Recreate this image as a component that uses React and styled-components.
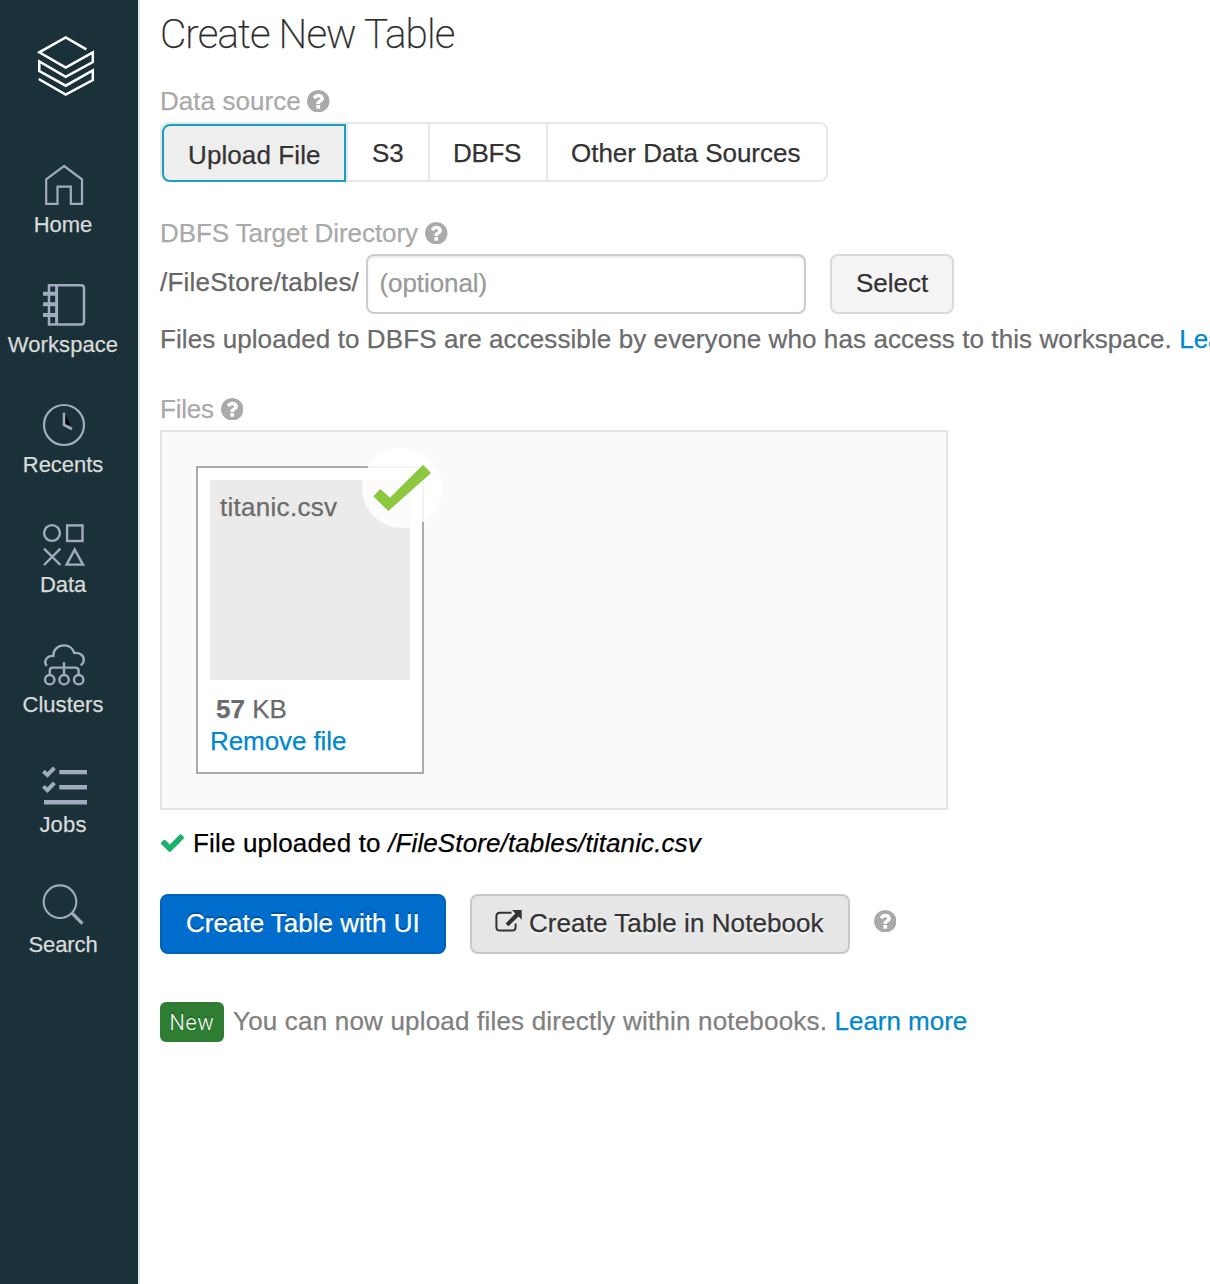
import React from "react";
import styled, { createGlobalStyle, css } from "styled-components";

const GlobalStyle = createGlobalStyle`
  *, *::before, *::after { box-sizing: border-box; }
  body {
    margin: 0;
    background: #fff;
    overflow: hidden;
    font-family: "Liberation Sans", Arial, sans-serif;
    font-size: 26px;
    line-height: 40px;
    color: #6b6b6b;
    -webkit-text-stroke: 0.25px currentColor;
  }
  button, input { font: inherit; margin: 0; }
`;

const Page = styled.div`
  display: flex;
  height: 1284px;
  overflow: hidden;
`;

/* ---------- sidebar ---------- */

const Sidebar = styled.nav`
  flex: none;
  width: 140px;
  padding: 35px 12px 0 0;
  display: flex;
  flex-direction: column;
  align-items: stretch;
  background: #1b3139;
  border-right: 2px solid #e4e8e8;
`;

const Logo = styled.svg`
  display: block;
  flex: none;
  width: 60px;
  height: 62px;
  margin: 0 0 67px 36px;
  fill: none;
  stroke: #fff;
  stroke-width: 2.5;
`;

const NavItem = styled.a`
  flex: none;
  display: flex;
  flex-direction: column;
  align-items: center;
  height: 120px;
  color: #d8dbda;
  text-decoration: none;
`;

const NavIcon = styled.svg`
  display: block;
  width: 50px;
  height: 42px;
  fill: none;
  stroke: #a0abbf;
  stroke-width: 2.4;
  overflow: visible;
`;

const NavLabel = styled.span`
  margin-top: 6px;
  font-size: 22px;
  line-height: 26px;
  letter-spacing: ${(p) => p.$track || 0}px;
  white-space: nowrap;
`;

const HomeIcon = () => (
  <path d="M64 2 L82 15.3 V39.8 H70.8 V22.7 H57.5 V39.8 H46.2 V15.3 Z" strokeWidth="2.2" />
);

const WorkspaceIcon = () => (
  <>
    <path d="M49 1.2 H81 Q84 1.2 84 4.2 V37.6 Q84 40.6 81 40.6 H49 Z" strokeWidth="2.5" />
    <path d="M56.6 1 V41" strokeWidth="3" />
    <path d="M43 9.7 H57 M43 20.3 H57 M43 31 H57" strokeWidth="4" />
  </>
);

const RecentsIcon = () => (
  <>
    <circle cx="64" cy="21" r="20" strokeWidth="2.2" />
    <path d="M65 9.5 L70.5 21.5 L65 20 Z" fill="#000" stroke="none" />
    <path d="M64 8.8 V21 L72 25" strokeWidth="2.6" />
  </>
);

const DataIcon = () => (
  <>
    <circle cx="52" cy="9" r="7.9" />
    <rect x="67.1" y="1.4" width="15.4" height="15.6" />
    <path d="M44 24.6 L60.4 41 M60.4 24.6 L44 41" />
    <path d="M74.7 25.6 L83 40.6 H66.6 Z" />
  </>
);

const ClustersIcon = () => (
  <>
    <path d="M46.8 22 C43.4 17.5 46.3 11.6 53.3 11.9 C53 5.8 58 1.4 64 1.4 C69 1.4 73 4.6 74.2 9 C79.5 8.2 84 11.5 83.8 16 C83.6 18.6 82.4 20.2 80.6 21.3" />
    <path d="M64 18.2 V31 M49.8 31 V26.5 Q49.8 23.6 52.8 23.6 H75.6 Q78.6 23.6 78.6 26.5 V31" />
    <circle cx="49.7" cy="35.7" r="4.7" />
    <circle cx="64.1" cy="35.7" r="4.7" />
    <circle cx="78.7" cy="35.7" r="4.7" />
  </>
);

const JobsIcon = () => (
  <>
    <path d="M43.4 7.3 L47.4 11 L54.4 3.8 M43.4 22.4 L47.4 26.1 L54.4 18.9" strokeWidth="4" />
    <path d="M59.3 8.1 H87 M59.3 23.2 H87 M44 38.3 H87" strokeWidth="4.4" />
  </>
);

const SearchIcon = () => (
  <>
    <circle cx="60" cy="17.7" r="16.3" strokeWidth="2.1" />
    <path d="M71.8 28.9 L82.4 39.6" strokeWidth="3.4" />
  </>
);

const NAV = [
  { label: "Home", Icon: HomeIcon, track: -0.05 },
  { label: "Workspace", Icon: WorkspaceIcon, track: 0.07 },
  { label: "Recents", Icon: RecentsIcon, track: -0.05 },
  { label: "Data", Icon: DataIcon, track: -0.1 },
  { label: "Clusters", Icon: ClustersIcon, track: 0.04 },
  { label: "Jobs", Icon: JobsIcon, track: 0.17 },
  { label: "Search", Icon: SearchIcon, track: -0.09 },
];

/* ---------- main column ---------- */

const Main = styled.main`
  flex: none;
  width: 1070px;
  padding: 4px 0 0 20px;
  overflow: hidden;
`;

const Title = styled.h1`
  margin: 0 0 17px;
  font-family: Roboto, "Liberation Sans", sans-serif;
  font-weight: 200;
  font-size: 40.5px;
  line-height: 60px;
  letter-spacing: -0.9px;
  color: #2b2b2b;
`;

const FieldLabel = styled.div`
  display: flex;
  align-items: flex-start;
  gap: ${(p) => p.$gap}px;
  height: 40px;
  color: #aaa;
  letter-spacing: ${(p) => p.$track || 0}px;
`;

const HelpSvg = styled.svg`
  flex: none;
  width: 22.5px;
  height: 22.5px;
  margin-top: 8.5px;
  fill: #aaa;
`;

const Help = () => (
  <HelpSvg viewBox="128 128 1536 1536">
    <path d="M1024 1376v-192q0-14-9-23t-23-9h-192q-14 0-23 9t-9 23v192q0 14 9 23t23 9h192q14 0 23-9t9-23zM1280 704q0-88-55.5-163t-138.5-116-170-41q-243 0-371 213-15 24 8 42l132 100q7 6 19 6 16 0 25-12 53-68 86-92 34-24 86-24 48 0 85.500 26t37.500 59q0 38-20 61t-68 45q-63 28-115.500 86.500t-52.500 125.500v36q0 14 9 23t23 9h192q14 0 23-9t9-23q0-19 21.500-49.500t54.500-49.500q32-18 49-28.500t46-35 44.500-48 28-60.500 12.500-81zM1664 896q0 209-103 385.500t-279.500 279.500-385.500 103-385.500-103-279.500-279.500-103-385.500 103-385.500 279.500-279.500 385.500-103 385.500 103 279.500 279.500 103 385.500z" />
  </HelpSvg>
);

const Tabs = styled.div`
  display: flex;
  width: 668px;
  height: 60px;
  margin: 1px 0 31px;
  border: 2px solid #e8e8e8;
  border-radius: 8px;
`;

const Tab = styled.button`
  flex: none;
  width: ${(p) => p.$width}px;
  height: 56px;
  padding: 0 0 0 ${(p) => p.$inset}px;
  border: 0;
  border-right: ${(p) => (p.$last ? 0 : "2px solid #e8e8e8")};
  background: none;
  text-align: left;
  line-height: 58px;
  letter-spacing: ${(p) => p.$track || 0}px;
  white-space: nowrap;
  color: #333;
  ${(p) =>
    p.$active &&
    css`
      height: 58px;
      border: 2px solid #1b9fc0;
      border-radius: 8px 0 0 8px;
      background: #eee;
      box-shadow: 2px 0 0 #e8e8e8;
      margin-right: 2px;
    `}
`;

const DirectoryRow = styled.div`
  display: flex;
  align-items: flex-start;
  height: 60px;
  margin: 1px 0 5px;
`;

const Prefix = styled.span`
  width: 206px;
  line-height: 56px;
  letter-spacing: 0.22px;
  white-space: nowrap;
  color: #666;
`;

const PathInput = styled.input`
  width: 440px;
  height: 60px;
  margin-right: 24px;
  padding: 0 12px 2px 11.5px;
  border: 2px solid #ccc;
  border-radius: 8px;
  background: #fff;
  box-shadow: inset 0 2px 2px rgba(0, 0, 0, 0.075);
  outline: none;
  &::placeholder {
    color: #999;
    opacity: 1;
    letter-spacing: -0.08px;
  }
`;

const Button = styled.button`
  display: flex;
  align-items: flex-start;
  width: ${(p) => p.$width}px;
  height: 60px;
  padding: 0 0 0 ${(p) => p.$inset}px;
  border: 2px solid ${(p) => (p.$primary ? "#0062b8" : p.$raised ? "#c8c8c8" : "#d9d9d9")};
  border-radius: 8px;
  background: ${(p) => (p.$primary ? "#006dcc" : p.$raised ? "#e6e6e6" : "#f4f4f4")};
  color: ${(p) => (p.$primary ? "#fff" : "#333")};
  text-shadow: ${(p) =>
    p.$primary ? "0 -2px 0 rgba(0, 0, 0, 0.25)" : "0 2px 2px rgba(255, 255, 255, 0.75)"};
  line-height: 54px;
  letter-spacing: ${(p) => p.$track || 0}px;
  white-space: nowrap;
`;

const Note = styled.p`
  margin: 0 0 30px;
  letter-spacing: 0.09px;
  white-space: nowrap;
`;

const Link = styled.a`
  color: #08c;
  letter-spacing: ${(p) => p.$track || 0}px;
  text-decoration: none;
`;

const DropZone = styled.div`
  width: 788px;
  height: 380px;
  margin-top: 1px;
  padding: 34px;
  border: 2px solid #e5e5e5;
  background: #fafafa;
`;

const FileCard = styled.div`
  position: relative;
  width: 228px;
  height: 308px;
  padding: 12px;
  border: 2px solid #acacac;
  background: #fff;
`;

const Preview = styled.div`
  height: 200px;
  padding: 7px 10px;
  background: #ebebeb;
  letter-spacing: 0.28px;
`;

const FileSize = styled.div`
  margin-top: 13px;
  padding: 0 6px;
  line-height: 32px;
`;

const RemoveLink = styled(Link)`
  display: block;
  line-height: 32px;
`;

const DoneBadge = styled.svg`
  position: absolute;
  top: -20px;
  left: 164px;
  width: 80px;
  height: 80px;
`;

const Status = styled.div`
  display: flex;
  height: 40px;
  margin: 13px 0 31px;
  color: #000;
  letter-spacing: 0.17px;
  white-space: pre;
`;

const StatusCheck = styled.svg`
  width: 23px;
  height: 18px;
  margin: 11px 9px 0 1px;
  fill: #1cb16a;
`;

const Path = styled.em`
  letter-spacing: 0.12px;
`;

const Actions = styled.div`
  display: flex;
  gap: 24px;
  margin-bottom: 48px;
  ${HelpSvg} { margin: 15.5px 0 0 -0.5px; }
`;

const OpenIcon = styled.svg`
  flex: none;
  width: 27px;
  height: 24px;
  margin: 13px 7px 0 0;
  overflow: visible;
`;

const News = styled.div`
  display: flex;
  height: 40px;
  line-height: 38px;
  color: #808080;
  letter-spacing: 0.19px;
  white-space: pre;
`;

const NewBadge = styled.span`
  width: 64px;
  height: 40px;
  margin-right: 9px;
  border-radius: 6px;
  background: #2e7d32;
  color: #fff;
  font-family: Roboto, "Liberation Sans", sans-serif;
  font-weight: 300;
  font-size: 21.5px;
  line-height: 41px;
  letter-spacing: 0.8px;
  text-align: center;
  text-shadow: 0 -2px 0 rgba(0, 0, 0, 0.2);
  -webkit-text-stroke: 0;
`;

export default function App() {
  return (
    <>
      <GlobalStyle />
      <Page>
        <Sidebar>
          <Logo viewBox="36 35 60 62">
            <path d="M86.3 49.3 L65.7 37.4 L39.3 52.3 L65.7 67.5 L92.8 52.3 V62 L65.7 76.8 L39.3 61.5 V71 L65.7 85.7 L92.8 70.3 V80 L65.7 94.6 L38.7 79" />
          </Logo>
          {NAV.map(({ label, Icon, track }) => (
            <NavItem key={label}>
              <NavIcon viewBox="38 0 50 42">
                <Icon />
              </NavIcon>
              <NavLabel $track={track}>{label}</NavLabel>
            </NavItem>
          ))}
        </Sidebar>
        <Main>
          <Title>Create New Table</Title>

          <FieldLabel $track={0.05} $gap={6.7}>Data source<Help /></FieldLabel>
          <Tabs>
            <Tab $active $width={184} $inset={24} $track={0.1}>Upload File</Tab>
            <Tab $width={82} $inset={24} $track={0}>S3</Tab>
            <Tab $width={118} $inset={23} $track={-0.3}>DBFS</Tab>
            <Tab $last $width={278} $inset={23} $track={-0.02}>Other Data Sources</Tab>
          </Tabs>

          <FieldLabel $track={-0.08} $gap={7.3}>DBFS Target Directory<Help /></FieldLabel>
          <DirectoryRow>
            <Prefix>/FileStore/tables/</Prefix>
            <PathInput placeholder="(optional)" />
            <Button $width={124} $inset={24}>Select</Button>
          </DirectoryRow>
          <Note>
            Files uploaded to DBFS are accessible by everyone who has access to this workspace.{" "}
            <Link>Learn more</Link>
          </Note>

          <FieldLabel $track={-0.25} $gap={7.2}>Files<Help /></FieldLabel>
          <DropZone>
            <FileCard>
              <Preview>titanic.csv</Preview>
              <FileSize><b>57</b> KB</FileSize>
              <RemoveLink $track={-0.08}>Remove file</RemoveLink>
              <DoneBadge viewBox="0 0 80 80">
                <circle cx="40" cy="40" r="40" fill="#fff" fillOpacity="0.85" />
                <path d="M18.3 41 L28 49.7 L61 16.7 L69 25 L26.3 63 L11.3 48.3 Z" fill="#8dc63f" />
              </DoneBadge>
            </FileCard>
          </DropZone>

          <Status>
            <StatusCheck viewBox="121 309 1550 1213" preserveAspectRatio="none">
              <path d="M1671 566q0 40-28 68l-724 724-136 136q-28 28-68 28t-68-28l-136-136-362-362q-28-28-28-68t28-68l136-136q28-28 68-28t68 28l294 295 656-657q28-28 68-28t68 28l136 136q28 28 28 68z" />
            </StatusCheck>
            File uploaded to <Path>/FileStore/tables/titanic.csv</Path>
          </Status>

          <Actions>
            <Button $primary $width={286} $inset={24} $track={0.01}>Create Table with UI</Button>
            <Button $raised $width={380} $inset={23} $track={0.07}>
              <OpenIcon viewBox="0 0 27 24">
                <path d="M16.5 3.8 H5 Q1.4 3.8 1.4 7.4 V18 Q1.4 21.6 5 21.6 H17 Q20.6 21.6 20.6 18 V14.5" fill="none" stroke="#333" strokeWidth="2" />
                <path d="M17 1 H26.7 V10.7 L23.6 7.6 L13.4 17.2 L10.6 14.4 L20.4 4.4 Z" fill="#333" />
              </OpenIcon>
              Create Table in Notebook
            </Button>
            <Help />
          </Actions>

          <News>
            <NewBadge>New</NewBadge>
            You can now upload files directly within notebooks. <Link $track={-0.02}>Learn more</Link>
          </News>
        </Main>
      </Page>
    </>
  );
}
